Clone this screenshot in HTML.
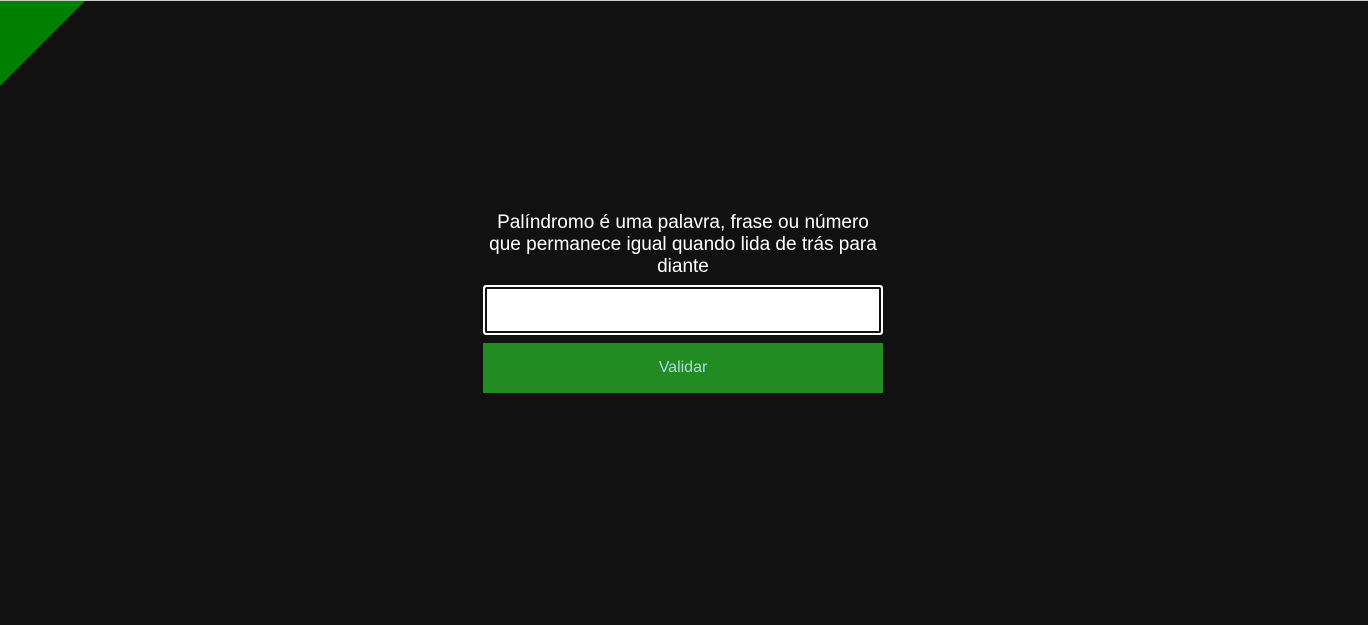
<!DOCTYPE html>
<html><head><meta charset="utf-8"><style>
html,body{margin:0;padding:0;}
body{width:1368px;height:625px;background:#111;position:relative;overflow:hidden;font-family:"Liberation Sans",sans-serif;}
.line{position:absolute;left:0;top:0;width:1368px;height:1px;background:#ccc;}
.tri{position:absolute;left:0;top:1px;width:0;height:0;border-top:85px solid #008000;border-right:85px solid transparent;}
.txt{position:absolute;left:483px;top:212px;width:400px;text-align:center;color:#fff;font-size:19px;line-height:22px;}
.inp{position:absolute;left:483px;top:285px;width:400px;height:50px;box-sizing:border-box;background:#fff;border:1px solid #fff;border-radius:3px;}
.inp div{position:absolute;inset:1px;border:2px solid #111;border-radius:2px;}
.btn{position:absolute;left:483px;top:343px;width:400px;height:50px;background:#228b22;color:#add8e6;font-size:16px;line-height:50px;text-align:center;}
</style></head><body>
<div class="line"></div>
<div class="tri"></div>
<div class="txt">Palíndromo é uma palavra, frase ou número que permanece igual quando lida de trás para diante</div>
<div class="inp"><div></div></div>
<div class="btn">Validar</div>
</body></html>
